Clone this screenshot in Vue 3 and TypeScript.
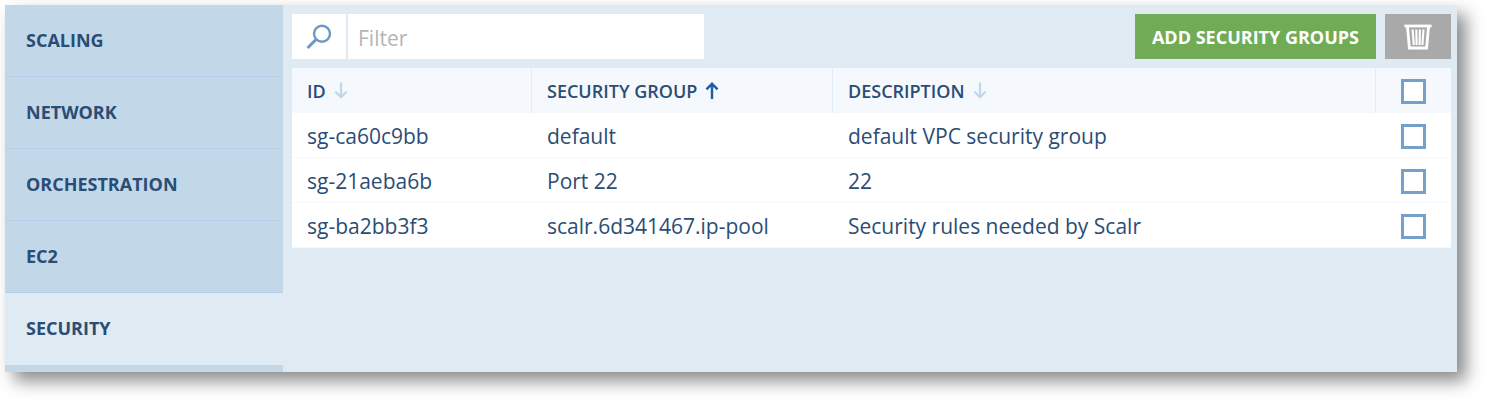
<script setup lang="ts">
import { computed, ref } from 'vue'

type SortKey = 'id' | 'name' | 'description'

interface SecurityGroup {
  id: string
  name: string
  description: string
}

const sections: string[] = ['Scaling', 'Network', 'Orchestration', 'EC2', 'Security']
const activeSection = ref('Security')

const columns: { key: SortKey; label: string }[] = [
  { key: 'id', label: 'ID' },
  { key: 'name', label: 'Security group' },
  { key: 'description', label: 'Description' },
]

const groups = ref<SecurityGroup[]>([
  { id: 'sg-ca60c9bb', name: 'default', description: 'default VPC security group' },
  { id: 'sg-21aeba6b', name: 'Port 22', description: '22' },
  { id: 'sg-ba2bb3f3', name: 'scalr.6d341467.ip-pool', description: 'Security rules needed by Scalr' },
])

const filter = ref('')
const sortKey = ref<SortKey>('name')
const selected = ref<string[]>([])

const visibleGroups = computed(() => {
  const query = filter.value.trim().toLowerCase()
  return groups.value
    .filter((g) => `${g.id} ${g.name} ${g.description}`.toLowerCase().includes(query))
    .sort((a, b) => a[sortKey.value].localeCompare(b[sortKey.value]))
})

const allSelected = computed({
  get: () => visibleGroups.value.length > 0 && visibleGroups.value.every((g) => selected.value.includes(g.id)),
  set: (on: boolean) => {
    selected.value = on ? visibleGroups.value.map((g) => g.id) : []
  },
})

function removeSelected(): void {
  groups.value = groups.value.filter((g) => !selected.value.includes(g.id))
  selected.value = []
}
</script>

<template>
  <div class="panel">
    <nav class="sidebar" aria-label="Sections">
      <a
        v-for="section in sections"
        :key="section"
        href="#"
        class="section"
        :class="{ active: section === activeSection }"
        @click.prevent="activeSection = section"
      >{{ section }}</a>
    </nav>

    <main class="content">
      <div class="toolbar">
        <div class="search">
          <label class="search-icon" for="filter" aria-label="Filter">
            <svg width="26" height="26" viewBox="0 0 26 26" fill="none" stroke="#6c9ac6">
              <circle cx="16" cy="9.8" r="8" stroke-width="2.4" />
              <path d="M10.2 15.4 1.6 24" stroke-width="3" />
            </svg>
          </label>
          <input id="filter" v-model="filter" class="search-input" type="text" placeholder="Filter" />
        </div>
        <div class="actions">
          <button type="button" class="add">Add security groups</button>
          <button type="button" class="remove" aria-label="Delete selected" @click="removeSelected">
            <svg width="28" height="26" viewBox="0 0 28 26" fill="none" stroke="#fff">
              <path d="M0.4 2H27.6" stroke-width="2.8" />
              <path d="M3.4 2 5.4 24H22.6L24.6 2" stroke-width="2.8" />
              <path d="M8.6 5.5 9.8 21M12.3 5.5 12.6 21M15.9 5.5 15.6 21M19.5 5.5 18.4 21" stroke-width="2.1" />
            </svg>
          </button>
        </div>
      </div>

      <table class="grid">
        <colgroup>
          <col class="col-id" />
          <col class="col-name" />
          <col />
          <col class="col-check" />
        </colgroup>
        <thead>
          <tr>
            <th v-for="column in columns" :key="column.key" scope="col">
              <button type="button" class="sort" :class="{ sorted: sortKey === column.key }" @click="sortKey = column.key">
                {{ column.label }}
                <svg width="14" height="18" viewBox="0 0 14 18" fill="none" stroke="currentColor">
                  <path v-if="sortKey === column.key" d="M7 17V2M1.4 7.4 7 1.8 12.6 7.4" stroke-width="2.4" />
                  <path v-else d="M7 0.5V15M1.4 9.7 7 15.1 12.6 9.7" stroke-width="2.2" />
                </svg>
              </button>
            </th>
            <th class="check" scope="col">
              <input v-model="allSelected" type="checkbox" aria-label="Select all" />
            </th>
          </tr>
        </thead>
        <tbody>
          <tr v-for="group in visibleGroups" :key="group.id">
            <td>{{ group.id }}</td>
            <td>{{ group.name }}</td>
            <td>{{ group.description }}</td>
            <td class="check">
              <input v-model="selected" type="checkbox" :value="group.id" :aria-label="`Select ${group.id}`" />
            </td>
          </tr>
        </tbody>
      </table>
    </main>
  </div>
</template>

<style>
body {
  background: #fff;
}
</style>

<style scoped>
.panel {
  display: flex;
  margin: 5px 29px 29px 5px;
  background: #e0eaf3;
  box-shadow: 9px 9px 16px rgba(0, 0, 0, 0.46);
  color: #2b4d75;
  font-family: 'Open Sans', 'Noto Sans', sans-serif;
  font-size: 21px;
}

.sidebar {
  flex: 0 0 278px;
  box-sizing: border-box;
  padding-bottom: 7px;
  background: #c2d7e8;
}

.section {
  display: block;
  padding: 0 21px;
  border-bottom: 1px solid #b5cfec;
  color: inherit;
  font-size: 18px;
  font-weight: 700;
  line-height: 71px;
  text-decoration: none;
  text-transform: uppercase;
}

.section.active {
  border-bottom-color: #e0eaf3;
  background: #e0eaf3;
}

.content {
  flex: 1;
  min-width: 0;
  padding: 9px 6px 9px 9px;
}

.toolbar {
  display: flex;
  justify-content: space-between;
  gap: 9px;
  height: 45px;
  margin-bottom: 9px;
}

.search {
  display: flex;
  flex: 0 1 412px;
  gap: 2px;
  min-width: 0;
}

.search-icon {
  display: flex;
  flex: 0 0 54px;
  align-items: center;
  justify-content: center;
  background: #fff;
}

.search-input {
  flex: 1;
  min-width: 0;
  padding: 2px 10px 0;
  border: 0;
  border-radius: 0;
  background: #fff;
  color: inherit;
  font: inherit;
}

.search-input::placeholder {
  color: #b5b5b5;
  opacity: 1;
}

.actions {
  display: flex;
  gap: 9px;
}

.add,
.remove {
  border: 0;
  color: #fff;
  font-family: inherit;
}

.add {
  padding: 0 17px;
  background: #70ac56;
  font-size: 18px;
  font-weight: 700;
  text-transform: uppercase;
  white-space: nowrap;
}

.remove {
  display: flex;
  width: 66px;
  align-items: center;
  justify-content: center;
  padding: 0;
  background: #a9a9a9;
}

.grid {
  width: 100%;
  table-layout: fixed;
  border-collapse: separate;
  border-spacing: 0;
  background: #fff;
}

.col-id {
  width: 240px;
}

.col-name {
  width: 301px;
}

.col-check {
  width: 75px;
}

th,
td {
  box-sizing: border-box;
  height: 45px;
  padding: 0 15px;
  text-align: left;
  white-space: nowrap;
}

th {
  border-right: 1px solid #e0edf8;
  background: #f5f9fd;
}

td {
  padding-top: 1px;
  border-bottom: 1px solid #f3f8fd;
}

.sort {
  display: flex;
  align-items: center;
  gap: 8px;
  padding: 0;
  border: 0;
  background: none;
  color: #2b4d75;
  font-family: inherit;
  font-size: 18px;
  font-weight: 600;
  text-transform: uppercase;
}

.sort svg {
  color: #c2d5ea;
}

.sort.sorted svg {
  color: #1d5eab;
}

.check {
  padding: 2px 0 0;
  border-right: 0;
  text-align: center;
}

.check input {
  display: block;
  width: 25px;
  height: 25px;
  margin: 0 auto;
  border: 3px solid #75a0ca;
  appearance: none;
  background: #fff;
}

.check input:checked {
  background: #75a0ca;
  box-shadow: inset 0 0 0 3px #fff;
}
</style>
